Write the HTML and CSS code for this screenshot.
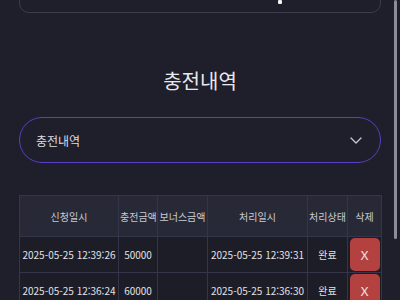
FILE: index.html
```html
<!DOCTYPE html>
<html lang="ko">
<head>
    <meta charset="UTF-8">
    <meta name="viewport" content="width=device-width, initial-scale=1.0">
    <title>충전내역</title>
    <link rel="stylesheet" href="styles.css">
</head>
<body>
    <div class="page">
        <div class="top-card">
            <span class="top-mark"></span>
        </div>

        <h2 class="title">충전내역</h2>

        <div class="select">
            <span>충전내역</span>
            <svg class="chevron" width="12" height="7" viewBox="0 0 12 7">
                <path d="M1 1 L6 6 L11 1" fill="none" stroke="#c9cad2" stroke-width="1.3" stroke-linecap="round" stroke-linejoin="round"/>
            </svg>
        </div>

        <table class="history">
            <thead>
                <tr>
                    <th class="c-date">신청일시</th>
                    <th class="c-amount">충전금액</th>
                    <th class="c-bonus">보너스금액</th>
                    <th class="c-date2">처리일시</th>
                    <th class="c-state">처리상태</th>
                    <th class="c-del">삭제</th>
                </tr>
            </thead>
            <tbody>
                <tr>
                    <td>2025-05-25 12:39:26</td>
                    <td>50000</td>
                    <td></td>
                    <td>2025-05-25 12:39:31</td>
                    <td>완료</td>
                    <td><button class="del-btn">X</button></td>
                </tr>
                <tr>
                    <td>2025-05-25 12:36:24</td>
                    <td>60000</td>
                    <td></td>
                    <td>2025-05-25 12:36:30</td>
                    <td>완료</td>
                    <td><button class="del-btn">X</button></td>
                </tr>
            </tbody>
        </table>
    </div>
    <div class="scroll-thumb"></div>
</body>
</html>
```

FILE: styles.css
```css
html, body {
    margin: 0;
    height: 100%;
    overflow: hidden;
    background: #1e1f2a;
    font-family: "Noto Sans CJK KR", "Noto Sans", sans-serif;
    color: #e4e4e8;
}

.page {
    padding: 0 19px;
}

.top-card {
    height: 60px;
    margin-top: -49px;
    border: 1.5px solid #3a3c4b;
    border-radius: 10px;
    position: relative;
}

.top-mark {
    position: absolute;
    left: 258px;
    bottom: 8px;
    width: 4px;
    height: 4px;
    background: #f2f2f2;
    border-radius: 1px;
}

.title {
    margin: 54px 0 0;
    text-align: center;
    font-size: 20px;
    font-weight: 400;
    line-height: 28px;
    color: #e8e8ec;
}

.select {
    margin-top: 22px;
    height: 44px;
    border: 1.5px solid #5b3ec6;
    border-radius: 23px;
    display: flex;
    align-items: center;
    justify-content: space-between;
    padding: 0 18px 0 16px;
    font-size: 12px;
    color: #dcdce2;
}

.chevron {
    display: block;
}

.history {
    margin-top: 32px;
    width: 362px;
    border-collapse: collapse;
    font-size: 10px;
    table-layout: fixed;
}

.history th,
.history td {
    box-sizing: border-box;
    border: 1px solid #33364a;
    text-align: center;
    padding: 0 1px;
    white-space: nowrap;
    overflow: hidden;
}

.history th {
    height: 41px;
    background: #272937;
    font-weight: 400;
    color: #c8c9d2;
}

.history td {
    height: 36px;
    background: #1c1d27;
    color: #e2e2e6;
}

.c-date { width: 99px; }
.c-amount { width: 39px; }
.c-bonus { width: 50px; }
.c-date2 { width: 100px; }
.c-state { width: 40px; }
.c-del { width: 34px; }

.del-btn {
    width: 30px;
    height: 33px;
    border: none;
    border-radius: 5px;
    background: #b3413f;
    color: #f4e6e6;
    font-size: 13px;
    font-family: "Noto Sans", sans-serif;
    padding: 0;
    vertical-align: middle;
    cursor: pointer;
}

.scroll-thumb {
    position: fixed;
    top: 0;
    right: 3px;
    width: 3px;
    height: 239px;
    background: #8b8d99;
    border-radius: 2px;
}
```
